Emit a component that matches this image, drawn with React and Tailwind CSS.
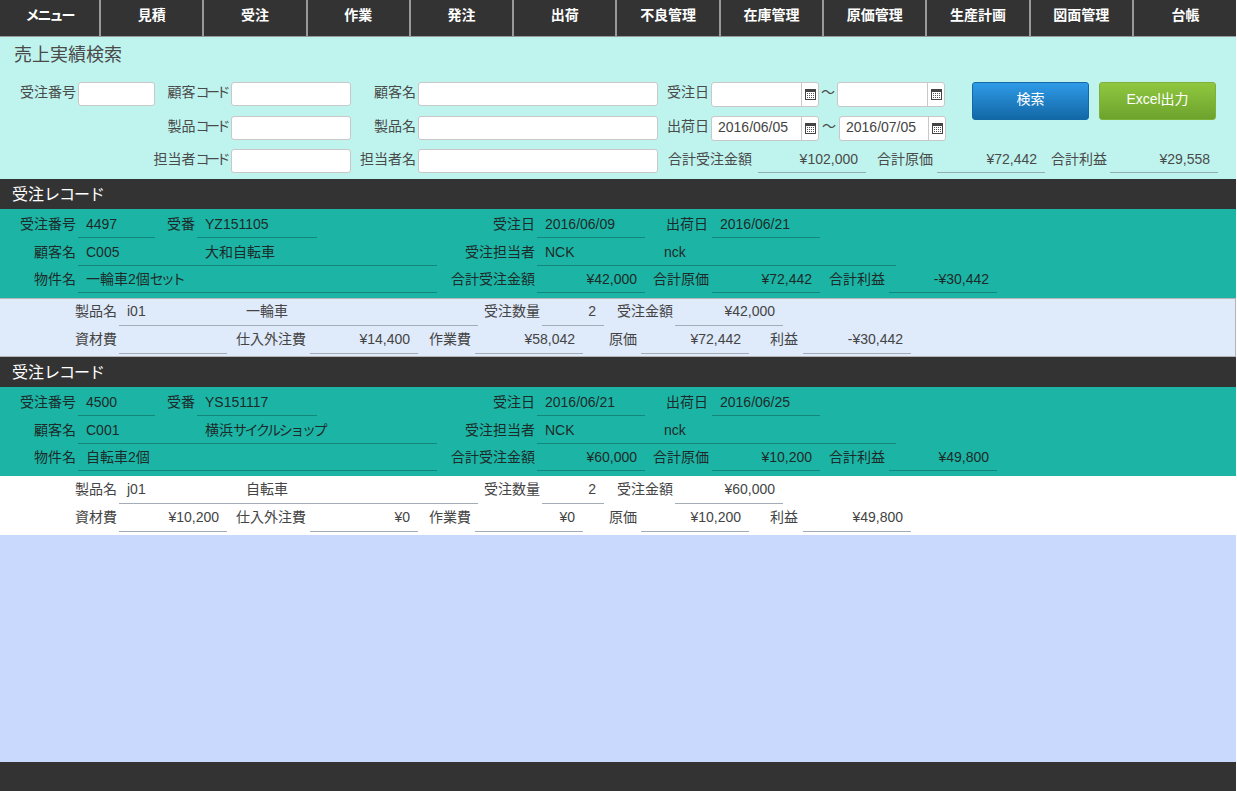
import React from "react";

const font = "font-['Liberation_Sans','Noto_Sans_CJK_JP',sans-serif]";

const menus = ["メニュー", "見積", "受注", "作業", "発注", "出荷", "不良管理", "在庫管理", "原価管理", "生産計画", "図面管理", "台帳"];

// カタカナは元画面だと幅が狭い
const Kana = ({ children }) => <span className="tracking-[-3.5px]">{children}</span>;

const records = [
  {
    no: "4497", ban: "YZ151105", orderDate: "2016/06/09", shipDate: "2016/06/21",
    code: "C005", customer: "大和自転車", staff: "NCK", staffName: "nck",
    title: <>一輪車2個<span className="tracking-[-3px]">セット</span></>,
    total: "¥42,000", cost: "¥72,442", profit: "-¥30,442",
    product: "i01", productName: "一輪車", qty: "2", amount: "¥42,000",
    material: "", outside: "¥14,400", work: "¥58,042", detailCost: "¥72,442", detailProfit: "-¥30,442",
    detailBg: "bg-[#dfeafa] border-[#b5b5b5]",
  },
  {
    no: "4500", ban: "YS151117", orderDate: "2016/06/21", shipDate: "2016/06/25",
    code: "C001",
    customer: <>横浜<span className="tracking-[-2.4px]">サイクルショップ</span></>,
    staff: "NCK", staffName: "nck", title: "自転車2個",
    total: "¥60,000", cost: "¥10,200", profit: "¥49,800",
    product: "j01", productName: "自転車", qty: "2", amount: "¥60,000",
    material: "¥10,200", outside: "¥0", work: "¥0", detailCost: "¥10,200", detailProfit: "¥49,800",
    detailBg: "bg-white border-white",
  },
];

const Label = ({ w, pr = "pr-[2px]", children }) => (
  <div className={`${w} ${pr} shrink-0 text-right whitespace-nowrap`}>{children}</div>
);

// 下線付きの表示項目
const Val = ({ w, right, line = "border-[#14877b]", children }) => (
  <div
    className={`${w} ${line} ${right ? "pr-[8px] text-right" : "pl-[8px] text-left"} shrink-0 h-[28px] border-b whitespace-nowrap`}
  >
    {children}
  </div>
);

const CalendarIcon = () => (
  <svg width="11" height="11" viewBox="0 0 11 11" className="block">
    <rect x="0.5" y="0.5" width="10" height="10" fill="#fff" stroke="#444" />
    <rect x="0" y="0" width="11" height="3" fill="#444" />
    <path d="M2 4h1v1H2zM4 4h1v1H4zM6 4h1v1H6zM8 4h1v1H8zM2 6h1v1H2zM4 6h1v1H4zM6 6h1v1H6zM8 6h1v1H8zM2 8h1v1H2zM4 8h1v1H4zM6 8h1v1H6zM8 8h1v1H8z" fill="#555" />
  </svg>
);

const TextBox = ({ w }) => (
  <div className={`${w} shrink-0 h-[24px] bg-white border border-[#c8c8c8] rounded-[3px]`} />
);

const DateBox = ({ w, value }) => (
  <div className={`${w} shrink-0 h-[25px] flex bg-white border border-[#c8c8c8] rounded-[3px]`}>
    <div className="flex-1 pl-[6px] leading-[20px] text-[#444]">{value}</div>
    <div className="w-[17px] border-l border-[#c8c8c8] flex items-center justify-center">
      <CalendarIcon />
    </div>
  </div>
);

const Total = ({ w, children }) => (
  <div className={`${w} shrink-0 h-[24px] pr-[8px] text-right border-b border-[#8fb0ad] leading-[20px]`}>
    {children}
  </div>
);

const SearchPanel = () => (
  <div className="h-[142px] bg-[#bff4ee] text-[#4a4a4a] text-[14px] relative">
    <div className="h-[45px] pl-[14px] pt-[6px] text-[18px] leading-[24px]">売上実績検索</div>
    <div className="flex items-start">
      <div className="w-[966px] shrink-0">
        <div className="flex h-[34px] leading-[20px]">
          <Label w="w-[78px]">受注番号</Label>
          <TextBox w="w-[77px]" />
          <Label w="w-[76px]" pr="pr-[4px]">顧客<Kana>コード</Kana></Label>
          <TextBox w="w-[120px]" />
          <Label w="w-[67px]">顧客名</Label>
          <TextBox w="w-[240px]" />
          <Label w="w-[53px]">受注日</Label>
          <DateBox w="w-[108px]" />
          <div className="w-[18px] shrink-0 text-center">～</div>
          <DateBox w="w-[108px]" />
        </div>
        <div className="flex h-[33px] leading-[20px]">
          <Label w="w-[231px]" pr="pr-[4px]">製品<Kana>コード</Kana></Label>
          <TextBox w="w-[120px]" />
          <Label w="w-[67px]">製品名</Label>
          <TextBox w="w-[240px]" />
          <Label w="w-[53px]">出荷日</Label>
          <DateBox w="w-[108px]" value="2016/06/05" />
          <div className="w-[20px] shrink-0 text-center">～</div>
          <DateBox w="w-[107px]" value="2016/07/05" />
        </div>
        <div className="flex h-[30px] leading-[21px]">
          <Label w="w-[231px]" pr="pr-[4px]">担当者<Kana>コード</Kana></Label>
          <TextBox w="w-[120px]" />
          <Label w="w-[67px]">担当者名</Label>
          <TextBox w="w-[240px]" />
          <div className="w-[10px] shrink-0" />
          <div className="w-[90px] shrink-0 whitespace-nowrap">合計受注金額</div>
          <Total w="w-[108px]">¥102,000</Total>
          <div className="w-[11px] shrink-0" />
          <div className="w-[60px] shrink-0 whitespace-nowrap">合計原価</div>
          <Total w="w-[108px]">¥72,442</Total>
          <div className="w-[6px] shrink-0" />
          <div className="w-[59px] shrink-0 whitespace-nowrap">合計利益</div>
          <Total w="w-[108px]">¥29,558</Total>
        </div>
      </div>
      <div className="flex gap-[10px] pl-[6px]">
        <div className="w-[117px] h-[38px] pb-[3px] flex items-center justify-center text-white rounded-[3px] border border-[#1369a5] bg-gradient-to-b from-[#2f9be8] to-[#1268a6]">
          検索
        </div>
        <div className="w-[117px] h-[38px] pb-[3px] flex items-center justify-center text-white rounded-[3px] border border-[#7fb13a] bg-gradient-to-b from-[#90c73f] to-[#6da32d]">
          Excel出力
        </div>
      </div>
    </div>
  </div>
);

const RecordBlock = ({ r }) => (
  <div>
    <div className="h-[30px] bg-[#333333] text-white text-[16px] pl-[12px] pt-[5px] leading-[22px]">
      受注<span className="tracking-[-1px]">レコード</span>
    </div>
    <div className="h-[89px] pt-[1px] bg-[#1cb5a5] text-[#1c2b2a] text-[14px] leading-[28px]">
      <div className="flex">
        <Label w="w-[78px]">受注番号</Label>
        <Val w="w-[77px]">{r.no}</Val>
        <Label w="w-[42px]">受番</Label>
        <Val w="w-[120px]">{r.ban}</Val>
        <Label w="w-[220px]">受注日</Label>
        <Val w="w-[108px]">{r.orderDate}</Val>
        <Label w="w-[67px]" pr="pr-[4px]">出荷日</Label>
        <Val w="w-[108px]">{r.shipDate}</Val>
      </div>
      <div className="flex">
        <Label w="w-[78px]">顧客名</Label>
        <Val w="w-[119px]">{r.code}</Val>
        <Val w="w-[240px]">{r.customer}</Val>
        <Label w="w-[100px]">受注担当者</Label>
        <Val w="w-[119px]">{r.staff}</Val>
        <Val w="w-[240px]">{r.staffName}</Val>
      </div>
      <div className="flex -mt-[1px]">
        <Label w="w-[78px]">物件名</Label>
        <Val w="w-[359px]">{r.title}</Val>
        <Label w="w-[100px]">合計受注金額</Label>
        <Val w="w-[108px]" right>{r.total}</Val>
        <Label w="w-[67px]" pr="pr-[3px]">合計原価</Label>
        <Val w="w-[108px]" right>{r.cost}</Val>
        <Label w="w-[69px]" pr="pr-[4px]">合計利益</Label>
        <Val w="w-[108px]" right>{r.profit}</Val>
      </div>
    </div>
    <div className={`${r.detailBg} h-[59px] border-y border-r text-[#444] text-[14px] leading-[26px]`}>
      <div className="flex -mt-[1px]">
        <Label w="w-[119px]">製品名</Label>
        <Val w="w-[119px]" line="border-[#a3adb8]">{r.product}</Val>
        <Val w="w-[240px]" line="border-[#a3adb8]">{r.productName}</Val>
        <Label w="w-[64px]">受注数量</Label>
        <Val w="w-[62px]" right line="border-[#a3adb8]">{r.qty}</Val>
        <Label w="w-[71px]">受注金額</Label>
        <Val w="w-[108px]" right line="border-[#a3adb8]">{r.amount}</Val>
      </div>
      <div className="flex">
        <Label w="w-[119px]">資材費</Label>
        <Val w="w-[108px]" right line="border-[#a3adb8]">{r.material}</Val>
        <Label w="w-[83px]" pr="pr-[4px]">仕入外注費</Label>
        <Val w="w-[108px]" right line="border-[#a3adb8]">{r.outside}</Val>
        <Label w="w-[57px]" pr="pr-[4px]">作業費</Label>
        <Val w="w-[108px]" right line="border-[#a3adb8]">{r.work}</Val>
        <Label w="w-[58px]" pr="pr-[4px]">原価</Label>
        <Val w="w-[108px]" right line="border-[#a3adb8]">{r.detailCost}</Val>
        <Label w="w-[54px]" pr="pr-[5px]">利益</Label>
        <Val w="w-[108px]" right line="border-[#a3adb8]">{r.detailProfit}</Val>
      </div>
    </div>
  </div>
);

export default function App() {
  return (
    <div className={`${font} h-[791px] w-[1236px] flex flex-col overflow-hidden bg-[#c9d9fd]`}>
      <div className="h-[37px] shrink-0 flex bg-[#333333] border-b border-[#999]">
        {menus.map((m, i) => (
          <div
            key={m}
            className={`${i === 0 ? "w-[101px] tracking-[-2px]" : "w-[103.3px]"} ${i === menus.length - 1 ? "" : "border-r-2 border-[#999]"} shrink-0 text-white text-[14px] font-bold text-center leading-[30px]`}
          >
            {m}
          </div>
        ))}
      </div>
      <SearchPanel />
      {records.map((r) => (
        <RecordBlock key={r.no} r={r} />
      ))}
      <div className="flex-1" />
      <div className="h-[29px] shrink-0 bg-[#333333]" />
    </div>
  );
}
